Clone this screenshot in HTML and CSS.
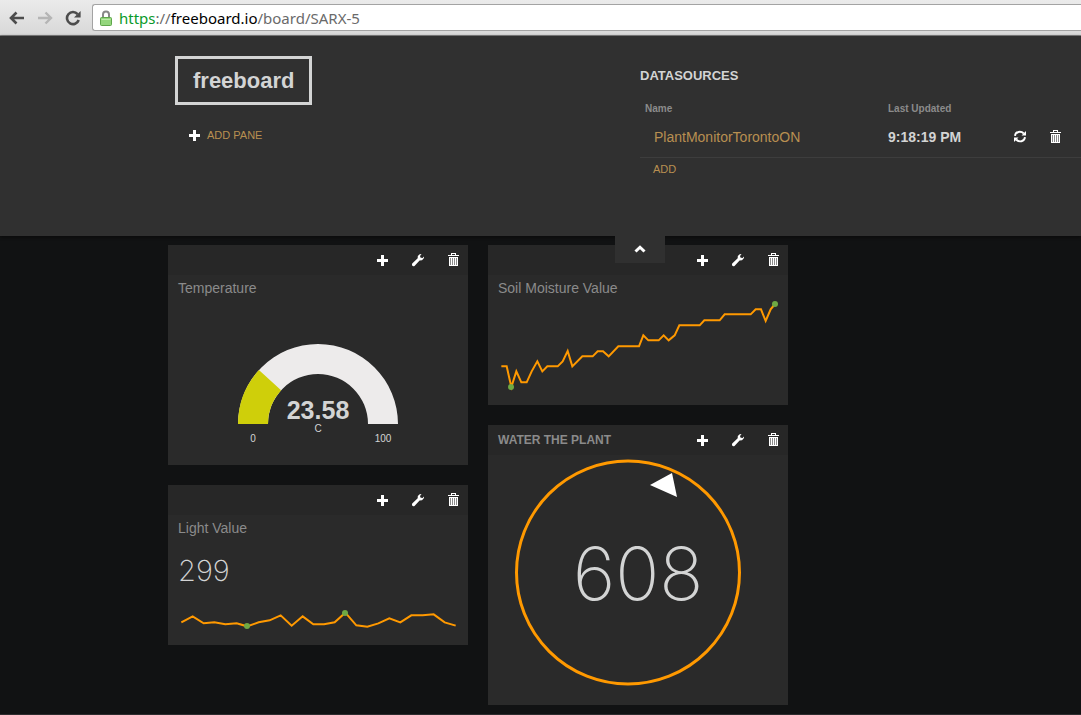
FILE: index.html
```html
<!DOCTYPE html>
<html lang="en">
<head>
<meta charset="utf-8">
<title>freeboard</title>
<link rel="stylesheet" href="styles.css">
</head>
<body>
<svg class="defs" aria-hidden="true">
  <symbol id="plus" viewBox="0 0 14 14"><path fill="#fff" d="M5 2h3v4h4v3H8v4H5V9H1V6h4z"/></symbol>
  <symbol id="wrench" viewBox="0 0 14 14"><path fill="#fff" d="M10.600 1 8.700 1.200 6.800 3 6.700 5.300 1.200 10.400Q.6 11.800 1.300 12.700 2.300 13.500 3.500 12.900L8.600 7.600 11 7.300 13 5 13 3.500 11.700 5 9.900 4.800 9.100 3.900 9.300 2.500z"/></symbol>
  <symbol id="trash" viewBox="0 0 14 14"><path fill="#fff" d="M5 0h5v2h3v1H2V2h3zM6 1v1h3V1zM3 4h9v9H3z"/><path fill="#8a8a8a" d="M4 5h1v7H4zM6 5h1v7H6zM8 5h1v7H8zM10 5h1v7h-1z"/></symbol>
  <symbol id="refresh" viewBox="0 0 14 14"><path fill="none" stroke="#fff" stroke-width="1.900" d="M2 5.800C2.500 1.300 8 .8 10.800 3.500M12 7.200C11.500 11.700 6 12.700 3.200 9.500"/><path fill="#fff" d="M13 1v4.500H8.500zM1 12V7.500h4.500z"/></symbol>
</svg>

<div class="browser">
  <button class="nav" aria-label="Back"><svg width="16" height="14" viewBox="0 0 16 14"><path d="M15 7H3M7.500 1.500 2 7l5.500 5.500" fill="none" stroke="#4c4c4c" stroke-width="2.600"/></svg></button>
  <button class="nav" aria-label="Forward"><svg width="16" height="14" viewBox="0 0 16 14"><path d="M1 7h12M8.500 1.500 14 7l-5.500 5.500" fill="none" stroke="#b5b5b5" stroke-width="2.400"/></svg></button>
  <button class="nav" aria-label="Reload"><svg width="16" height="16" viewBox="0 0 16 16"><path d="M12.600 4.200A6 6 0 1 0 13.700 10" fill="none" stroke="#4c4c4c" stroke-width="2.600"/><path d="M15.600 1v6.500H9z" fill="#4c4c4c"/></svg></button>
  <div class="address">
    <svg width="12" height="16" viewBox="0 0 12 16"><path d="M3 8V4.500a3 3 0 0 1 6 0V8" fill="none" stroke="#888" stroke-width="2"/><rect x=".5" y="7.500" width="11" height="8" rx="1" fill="#93d67c" stroke="#5fa64b"/><path d="M1.500 9.500h9" stroke="#bdeaa9"/></svg>
    <div class="url" role="textbox" aria-label="Address" contenteditable="true"><span class="secure">https</span>://<span class="host">freeboard.io</span>/board/SARX-5</div>
  </div>
</div>

<header class="admin">
  <div class="brand">
    <h1 class="logo">freeboard</h1>
    <button class="add-pane"><svg class="icon"><use href="#plus"/></svg>ADD PANE</button>
  </div>
  <section class="sources">
    <h2>DATASOURCES</h2>
    <table>
      <thead><tr><th class="name">Name</th><th class="updated">Last Updated</th><th></th></tr></thead>
      <tbody><tr>
        <td class="source"><a href="#source">PlantMonitorTorontoON</a></td>
        <td class="time">9:18:19 PM</td>
        <td><div class="tools">
          <button aria-label="Refresh"><svg class="icon"><use href="#refresh"/></svg></button>
          <button aria-label="Delete"><svg class="icon"><use href="#trash"/></svg></button>
        </div></td>
      </tr></tbody>
    </table>
    <button class="add">ADD</button>
  </section>
  <button class="toggle" aria-label="Collapse header"><svg width="12" height="8" viewBox="0 0 12 8"><path d="M1.500 6.500 6 2.200l4.500 4.300" fill="none" stroke="#fff" stroke-width="3"/></svg></button>
</header>

<main class="board">
  <div class="column">
    <section class="pane">
      <div class="pane-head"><h2></h2><div class="tools">
        <button aria-label="Add widget"><svg class="icon"><use href="#plus"/></svg></button>
        <button aria-label="Edit pane"><svg class="icon"><use href="#wrench"/></svg></button>
        <button aria-label="Delete pane"><svg class="icon"><use href="#trash"/></svg></button>
      </div></div>
      <h3>Temperature</h3>
      <svg class="chart" viewBox="0 0 300 164">
        <path d="M70 123A80 80 0 0 1 230 123H200A50 50 0 0 0 100 123z" fill="#edebeb"/>
        <path d="M70 123A80 80 0 0 1 90.900 69.100L113.100 89.300A50 50 0 0 0 100 123z" fill="#cfcf0a"/>
        <text class="reading" x="150" y="118">23.58</text>
        <text class="scale" x="150" y="131">C</text>
        <text class="scale" x="85" y="141">0</text>
        <text class="scale" x="215" y="141">100</text>
      </svg>
    </section>
    <section class="pane">
      <div class="pane-head"><h2></h2><div class="tools">
        <button aria-label="Add widget"><svg class="icon"><use href="#plus"/></svg></button>
        <button aria-label="Edit pane"><svg class="icon"><use href="#wrench"/></svg></button>
        <button aria-label="Delete pane"><svg class="icon"><use href="#trash"/></svg></button>
      </div></div>
      <h3>Light Value</h3>
      <p class="value">299</p>
      <svg class="chart" viewBox="24 378 900 132">
        <polyline class="line" points="64,442 98,424 131,445 163,442 196,448 230,445 261,454 296,442 329,436 362,421 395,452 428,424 460,448 492,448 524,442 556,413 589,451 622,455 655,445 688,430 721,442 754,421 788,421 821,418 854,442 887,452"/>
        <circle class="dot" cx="261" cy="453" r="9"/><circle class="dot" cx="555" cy="414" r="9"/>
      </svg>
    </section>
  </div>
  <div class="column">
    <section class="pane">
      <div class="pane-head"><h2></h2><div class="tools">
        <button aria-label="Add widget"><svg class="icon"><use href="#plus"/></svg></button>
        <button aria-label="Edit pane"><svg class="icon"><use href="#wrench"/></svg></button>
        <button aria-label="Delete pane"><svg class="icon"><use href="#trash"/></svg></button>
      </div></div>
      <h3>Soil Moisture Value</h3>
      <svg class="chart" viewBox="24 198 900 312">
        <polyline class="line" points="64,394 80,394 94,456 109,409 124,442 140,442 155,409 172,379 187,409 202,394 233,394 248,379 263,348 277,394 307,364 338,364 353,349 369,349 386,364 415,334 477,334 490,301 505,316 536,316 551,301 566,316 584,301 598,271 659,271 673,256 719,256 734,238 812,238 827,223 843,223 857,258 872,223 885,207"/>
        <circle class="dot" cx="93" cy="456" r="9"/><circle class="dot" cx="885" cy="207" r="9"/>
      </svg>
    </section>
    <section class="pane">
      <div class="pane-head"><h2>WATER THE PLANT</h2><div class="tools">
        <button aria-label="Add widget"><svg class="icon"><use href="#plus"/></svg></button>
        <button aria-label="Edit pane"><svg class="icon"><use href="#wrench"/></svg></button>
        <button aria-label="Delete pane"><svg class="icon"><use href="#trash"/></svg></button>
      </div></div>
      <svg class="chart" viewBox="0 0 300 250">
        <circle cx="140" cy="117.500" r="111.500" fill="none" stroke="#ff9900" stroke-width="3"/>
        <path d="M162 30 184 18 189 42z" fill="#fff"/>
        <text class="dial" x="150" y="145">608</text>
      </svg>
    </section>
  </div>
</main>
</body>
</html>
```
FILE: styles.css
```css
* { box-sizing: border-box; }
body {
  margin: 0;
  min-height: 100vh;
  background: #111213;
  border-bottom: 1px solid #2e2c2e;
  color: #d3d4d4;
  font-family: "Liberation Sans", Arial, sans-serif;
  font-size: 14px;
}
h1, h2, h3, p { margin: 0; }
button {
  padding: 0;
  border: 0;
  background: none;
  font: inherit;
  color: inherit;
  cursor: pointer;
}
svg { display: block; }
.defs { display: none; }
.icon { width: 14px; height: 14px; }

.browser {
  display: flex;
  align-items: center;
  gap: 12px;
  height: 36px;
  padding-left: 9px;
  background: linear-gradient(#ebebeb, #d8d8d8);
  border-bottom: 1px solid #8a8a8a;
}
.address {
  display: flex;
  flex: 1;
  align-items: center;
  gap: 7px;
  height: 27px;
  margin-left: -1px;
  padding-left: 7px;
  background: #fff;
  border: 1px solid #a3a3a3;
  border-right: 0;
  border-radius: 3px 0 0 3px;
}
.url {
  flex: 1;
  color: #6a6a6a;
  font: 15px/24px "Noto Sans", sans-serif;
  outline: 0;
}
.secure { color: #0a9a2a; }
.host { color: #000; }

.admin {
  position: relative;
  display: grid;
  grid-template-columns: 465px 1fr;
  height: 200px;
  padding: 20px 0 0 175px;
  background: #303030;
  box-shadow: 0 1px 3px #0a0a0a;
}
.brand {
  display: flex;
  flex-direction: column;
  align-items: flex-start;
  gap: 20px;
}
.logo {
  padding: 0 15px;
  border: 3px solid #d3d4d4;
  font-size: 22px;
  line-height: 43px;
}
.add-pane {
  display: flex;
  align-items: center;
  gap: 5px;
  margin-left: 13px;
  color: #b88f51;
  font-size: 11px;
  line-height: 20px;
}
.sources h2 {
  font-size: 13px;
  line-height: 40px;
}
table {
  width: 100%;
  border-collapse: collapse;
}
th, td { padding: 0; }
th {
  padding-left: 5px;
  color: #8b8b8b;
  font-size: 10px;
  line-height: 25px;
  text-align: left;
}
.name { width: 243px; }
.updated { width: 100px; }
tbody tr { border-bottom: 1px solid #3d3d3d; }
td {
  padding-bottom: 3px;
  line-height: 33px;
}
.source { padding-left: 14px; }
.source a {
  color: #b88f51;
  text-decoration: none;
}
.time {
  padding-left: 5px;
  font-weight: bold;
}
.tools {
  display: flex;
  justify-content: flex-end;
  gap: 21px;
}
td .tools { padding: 0 19px 1px 0; }
.add {
  margin-left: 13px;
  color: #b88f51;
  font-size: 11px;
  line-height: 22px;
}
.toggle {
  position: absolute;
  top: 100%;
  left: 615px;
  display: flex;
  justify-content: center;
  width: 50px;
  height: 27px;
  padding-top: 9px;
  background: #303030;
}

.board {
  display: flex;
  gap: 20px;
  padding: 9px 0 9px 168px;
}
.column {
  display: flex;
  flex-direction: column;
  gap: 20px;
  width: 300px;
}
.pane { background: #2a2a2a; }
.pane-head {
  display: flex;
  align-items: center;
  justify-content: space-between;
  height: 30px;
  padding: 0 8px 0 10px;
  background: #272727;
}
.pane-head h2 {
  color: #8b8b8b;
  font-size: 12px;
}
.pane h3 {
  padding: 0 10px;
  color: #8b8b8b;
  font-size: 14px;
  font-weight: normal;
  line-height: 26px;
}
.value {
  padding: 0 10px;
  font: 200 29px/60px Inter, sans-serif;
}
.chart { width: 100%; }
.chart text {
  fill: #d3d4d4;
  text-anchor: middle;
}
.reading {
  font-size: 25px;
  font-weight: bold;
}
.scale { font-size: 10px; }
.line {
  fill: none;
  stroke: #ff9900;
  stroke-width: 6;
}
.dot { fill: #6fa944; }
.dial { font: 200 73px Inter, sans-serif; }
```
